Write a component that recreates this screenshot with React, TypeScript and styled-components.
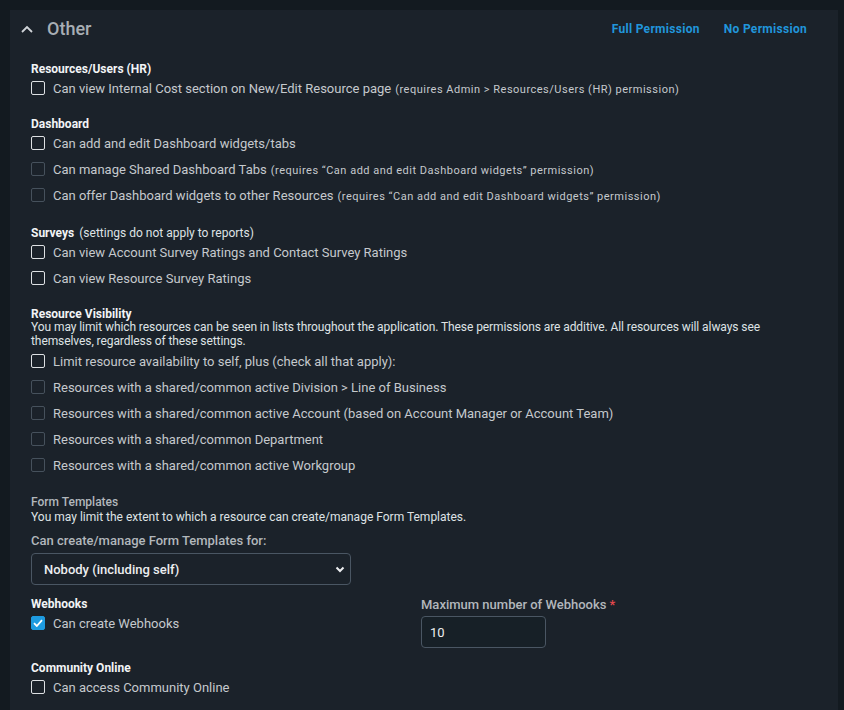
import styled, { createGlobalStyle } from 'styled-components';

// page-wide reset
const GlobalStyle = createGlobalStyle`
	body {
		margin: 0;
		background: #131a20;
		font-family: Roboto, 'Liberation Sans', sans-serif;
		color: #c5c9cd;
	}
`;

const StyledPage = styled.div`
	padding: 10px 6px 0 10px;
	height: 710px;
	box-sizing: border-box;
	overflow: hidden;
`;

const StyledPanel = styled.section`
	background: #1b222a;
	height: 100%;
`;

const StyledHeader = styled.header`
	display: flex;
	align-items: center;
	height: 37px;
	padding: 0 31px 0 11px;
`;

const StyledToggle = styled.button`
	display: flex;
	align-items: center;
	gap: 14px;
	background: none;
	border: 0;
	padding: 0;
	color: #a8aeb4;
	font-family: inherit;
	font-size: 18px;
	font-weight: 500;
	cursor: pointer;
`;

const StyledHeaderLinks = styled.div`
	margin-left: auto;
	display: flex;
	gap: 24px;
`;

const StyledLink = styled.a`
	color: #2196db;
	font-size: 12px;
	font-weight: 700;
	letter-spacing: 0.3px;
	text-decoration: none;
	cursor: pointer;
`;

const StyledBody = styled.div`
	padding: 0 21px;
`;

const StyledSection = styled.div<{ $gap?: number }>`
	margin-top: ${(p) => p.$gap ?? 15}px;
`;

const StyledTitle = styled.div<{ $muted?: boolean }>`
	font-size: 12px;
	line-height: 16px;
	margin-bottom: ${(p) => (p.$muted ? 0 : -2)}px;
	font-weight: ${(p) => (p.$muted ? 500 : 700)};
	color: ${(p) => (p.$muted ? '#b2b7bc' : '#f2f4f6')};
`;

const StyledTitleNote = styled.span`
	font-weight: 400;
	color: #dfe2e5;
	margin-left: 5px;
`;

const StyledDescription = styled.p<{ $tight?: boolean }>`
	margin: 0;
	font-size: 12px;
	line-height: 14px;
	color: #dfe2e5;
	letter-spacing: ${(p) => (p.$tight ? -0.08 : 0)}px;
`;

const StyledRow = styled.label`
	display: flex;
	align-items: center;
	height: 26px;
	gap: 8px;
	font-size: 13px;
	color: #c5c9cd;
`;

const StyledBox = styled.span<{ $disabled?: boolean; $checked?: boolean }>`
	flex: none;
	width: 14px;
	height: 14px;
	box-sizing: border-box;
	border-radius: 2px;
	border: 1.5px solid ${(p) => (p.$checked ? '#1e9be0' : p.$disabled ? '#46515c' : '#dde0e3')};
	background: ${(p) => (p.$checked ? '#1e9be0' : 'transparent')};
	display: flex;
	align-items: center;
	justify-content: center;
`;

const StyledNote = styled.span`
	font-size: 11px;
	letter-spacing: 0.5px;
	margin-left: 4px;
`;

const StyledFieldLabel = styled.div`
	font-size: 13px;
	line-height: 14px;
	font-weight: 500;
	color: #b2b7bc;
`;

const StyledSelect = styled.div`
	margin-top: 5px;
	width: 320px;
	height: 32px;
	box-sizing: border-box;
	border: 1px solid #4a5663;
	border-radius: 4px;
	display: flex;
	align-items: center;
	padding: 0 5px 0 12px;
	font-size: 13px;
	font-weight: 500;
	color: #eceef0;
`;

const StyledSelectIcon = styled.svg`
	margin-left: auto;
`;

const StyledColumns = styled.div`
	display: grid;
	grid-template-columns: 390px 1fr;
`;

const StyledRequired = styled.span`
	color: #e5484d;
	margin-left: 3px;
`;

const StyledInput = styled.div`
	margin-top: 4px;
	width: 125px;
	height: 32px;
	box-sizing: border-box;
	border: 1px solid #4a5663;
	border-radius: 4px;
	background: #172027;
	display: flex;
	align-items: center;
	padding: 0 8px;
	font-size: 13px;
	color: #eceef0;
`;

function Checkbox(props: { label: string; note?: string; disabled?: boolean; checked?: boolean }) {
	return (
		<StyledRow>
			<StyledBox $disabled={props.disabled} $checked={props.checked}>
				{props.checked && (
					<svg width="10" height="8" viewBox="0 0 10 8">
						<path d="M1 4.2 L3.8 7 L9 1.2" fill="none" stroke="#fff" strokeWidth="1.8" />
					</svg>
				)}
			</StyledBox>
			<span>
				{props.label}
				{props.note && <StyledNote>{props.note}</StyledNote>}
			</span>
		</StyledRow>
	);
}

const visibility = [
	'Resources with a shared/common active Division > Line of Business',
	'Resources with a shared/common active Account (based on Account Manager or Account Team)',
	'Resources with a shared/common Department',
	'Resources with a shared/common active Workgroup',
];

export default function App() {
	return (
		<>
			<GlobalStyle />
			<StyledPage>
				<StyledPanel>
					<StyledHeader>
						<StyledToggle>
							<svg width="12" height="8" viewBox="0 0 12 8">
								<path d="M1 7 L6 2 L11 7" fill="none" stroke="#d0d4d8" strokeWidth="1.8" />
							</svg>
							Other
						</StyledToggle>
						<StyledHeaderLinks>
							<StyledLink>Full Permission</StyledLink>
							<StyledLink>No Permission</StyledLink>
						</StyledHeaderLinks>
					</StyledHeader>

					<StyledBody>
						<StyledSection $gap={14}>
							<StyledTitle>Resources/Users (HR)</StyledTitle>
							<Checkbox
								label="Can view Internal Cost section on New/Edit Resource page"
								note="(requires Admin > Resources/Users (HR) permission)"
							/>
						</StyledSection>

						<StyledSection>
							<StyledTitle>Dashboard</StyledTitle>
							<Checkbox label="Can add and edit Dashboard widgets/tabs" />
							<Checkbox
								disabled
								label="Can manage Shared Dashboard Tabs"
								note="(requires “Can add and edit Dashboard widgets” permission)"
							/>
							<Checkbox
								disabled
								label="Can offer Dashboard widgets to other Resources"
								note="(requires “Can add and edit Dashboard widgets” permission)"
							/>
						</StyledSection>

						<StyledSection $gap={17}>
							<StyledTitle>
								Surveys<StyledTitleNote>(settings do not apply to reports)</StyledTitleNote>
							</StyledTitle>
							<Checkbox label="Can view Account Survey Ratings and Contact Survey Ratings" />
							<Checkbox label="Can view Resource Survey Ratings" />
						</StyledSection>

						<StyledSection>
							<StyledTitle>Resource Visibility</StyledTitle>
							<StyledDescription $tight>
								You may limit which resources can be seen in lists throughout the application. These
								permissions are additive. All resources will always see themselves, regardless of these
								settings.
							</StyledDescription>
							<Checkbox label="Limit resource availability to self, plus (check all that apply):" />
							{visibility.map((item) => (
								<Checkbox key={item} disabled label={item} />
							))}
						</StyledSection>

						<StyledSection $gap={16}>
							<StyledTitle $muted>Form Templates</StyledTitle>
							<StyledDescription>
								You may limit the extent to which a resource can create/manage Form Templates.
							</StyledDescription>
						</StyledSection>

						<StyledSection $gap={10}>
							<StyledFieldLabel>Can create/manage Form Templates for:</StyledFieldLabel>
							<StyledSelect>
								Nobody (including self)
								<StyledSelectIcon width="10" height="7" viewBox="0 0 10 7">
									<path d="M1.5 1.5 L5 5 L8.5 1.5" fill="none" stroke="#eceef0" strokeWidth="2" />
								</StyledSelectIcon>
							</StyledSelect>
						</StyledSection>

						<StyledColumns>
							<StyledSection $gap={11}>
								<StyledTitle>Webhooks</StyledTitle>
								<Checkbox checked label="Can create Webhooks" />
							</StyledSection>
							<StyledSection $gap={13}>
								<StyledFieldLabel>
									Maximum number of Webhooks<StyledRequired>*</StyledRequired>
								</StyledFieldLabel>
								<StyledInput>10</StyledInput>
							</StyledSection>
						</StyledColumns>

						<StyledSection $gap={12}>
							<StyledTitle>Community Online</StyledTitle>
							<Checkbox label="Can access Community Online" />
						</StyledSection>
					</StyledBody>
				</StyledPanel>
			</StyledPage>
		</>
	);
}
